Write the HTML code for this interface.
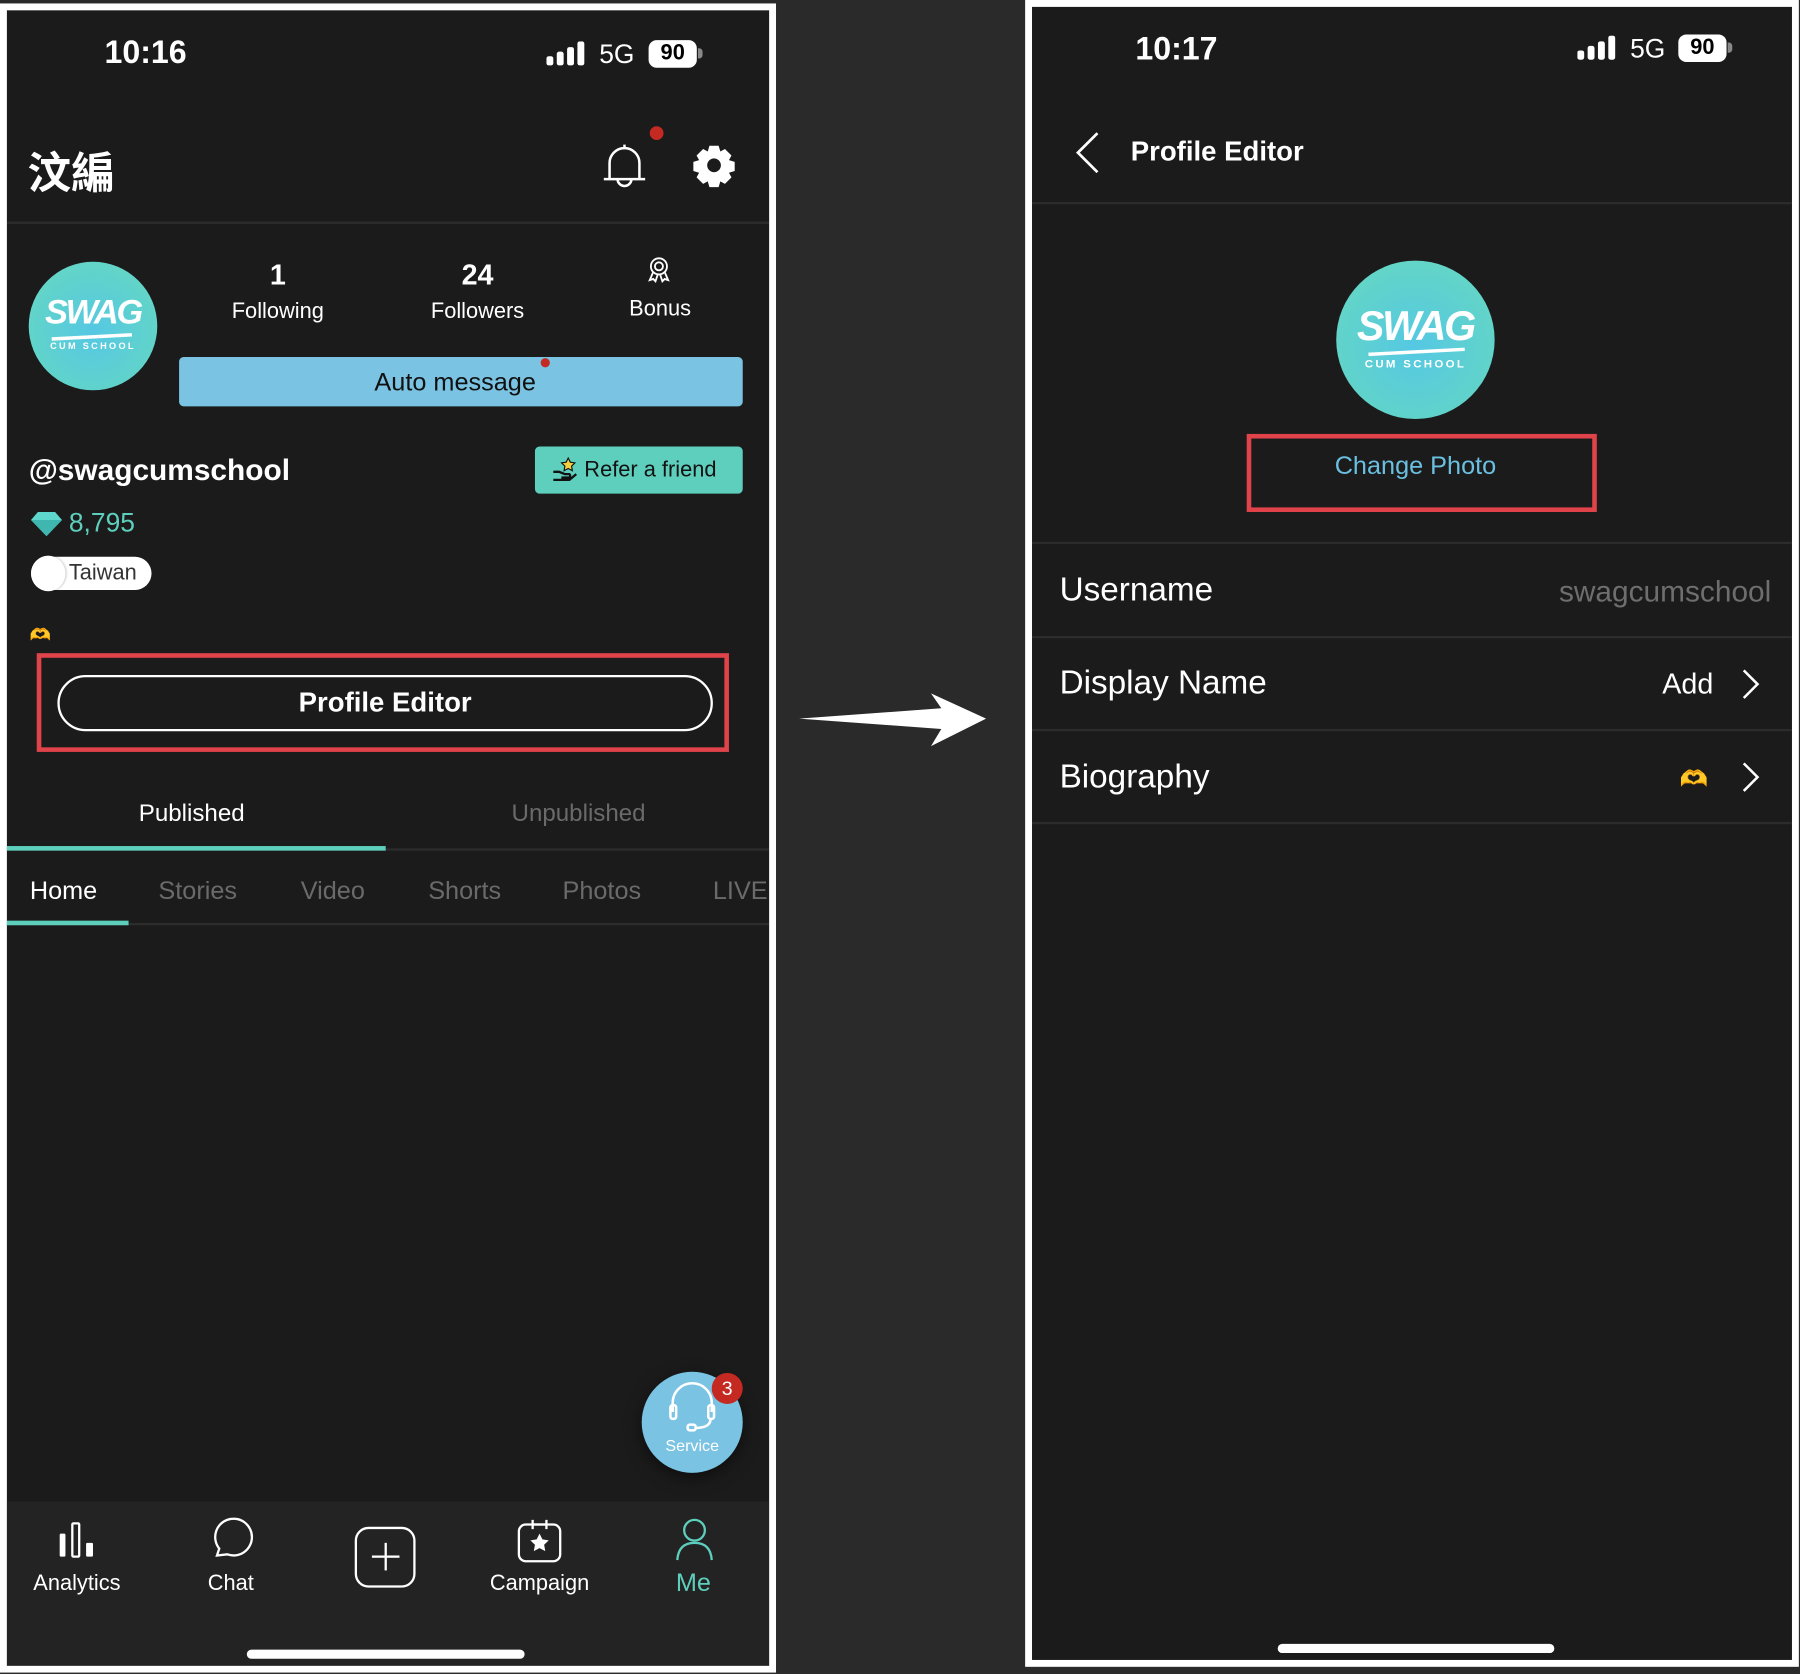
<!DOCTYPE html>
<html><head><meta charset="utf-8">
<style>
*{box-sizing:border-box;margin:0;padding:0}
html,body{width:1800px;height:1674px;overflow:hidden;background:#2a2a2a}
#root{position:absolute;left:0;top:0;width:1568px;height:1458px;transform:scale(1.14796);transform-origin:0 0;font-family:"Liberation Sans","Noto Sans CJK TC",sans-serif;color:#fff}
.a{position:absolute}
.phone{position:absolute;background:#1b1b1b;border:6px solid #fff;overflow:hidden}
.t{position:absolute;white-space:nowrap}
.c{transform:translateX(-50%)}
.div{position:absolute;height:2px;background:#2c2c2c}
.av{position:absolute;border-radius:50%;background:radial-gradient(circle at 50% 55%,#55c8e4 0%,#62d4c8 70%,#6fdcc0 100%)}
.av .sw{position:absolute;left:0;right:0;text-align:center;font-weight:bold;font-style:italic;color:#fff;letter-spacing:-2px}
.av .cs{position:absolute;left:0;right:0;text-align:center;font-weight:bold;color:#fff;letter-spacing:2px}
.gray{color:#6a6a6a}
</style></head><body><div id="root">

<!-- LEFT PHONE -->
<div class="phone" style="left:0;top:3px;width:676px;height:1454px;">
 <div class="a" style="left:-6px;top:-9px;width:676px;height:1458px;">
  <div class="t" style="left:91px;top:30px;font-size:28px;font-weight:bold">10:16</div>
  <svg class="a" style="left:476px;top:36px" width="36" height="22"><rect x="0" y="13" width="6" height="8" rx="2" fill="#fff"/><rect x="9" y="9" width="6" height="12" rx="2" fill="#fff"/><rect x="18" y="5" width="6" height="16" rx="2" fill="#fff"/><rect x="27" y="0" width="6" height="21" rx="2" fill="#fff"/></svg>
  <div class="t" style="left:522px;top:34px;font-size:23px">5G</div>
  <div class="a" style="left:565px;top:35px;width:42px;height:24px;border-radius:7px;background:#fff;color:#000;font-weight:bold;font-size:19px;text-align:center;line-height:24px">90</div>
  <div class="a" style="left:608px;top:42px;width:4px;height:9px;border-radius:0 3px 3px 0;background:#888"></div>

  <div class="t" style="left:24px;top:120px;font-size:38px;font-weight:bold">汶編</div>
  <svg class="a" style="left:522px;top:122px" width="44" height="44" viewBox="0 0 44 44" fill="none" stroke="#fff" stroke-width="2.2"><path d="M22 4v3M9 33V20a13 13 0 0 1 26 0v13M4 34h36M16 34a6 6 0 0 0 12 0"/></svg>
  <div class="a" style="left:566px;top:110px;width:12px;height:12px;border-radius:50%;background:#c42a22"></div>
  <svg class="a" style="left:602px;top:124px" width="40" height="40" viewBox="0 0 40 40"><path fill="#fff" fill-rule="evenodd" d="M16 3h8l1.5 5 4-2.2 5.7 5.7-2.2 4 5 1.5v8l-5 1.5 2.2 4-5.7 5.7-4-2.2-1.5 5h-8l-1.5-5-4 2.2-5.7-5.7 2.2-4-5-1.5v-8l5-1.5-2.2-4 5.7-5.7 4 2.2zM20 14a6 6 0 1 0 0.01 0z"/></svg>
  <div class="div" style="left:6px;top:193px;width:664px"></div>

  <div class="av" style="left:25px;top:228px;width:112px;height:112px">
   <div class="sw" style="top:28px;font-size:30px">SWAG</div>
   <div class="a" style="left:20px;top:64px;width:70px;height:3px;background:#fff;transform:rotate(-3deg)"></div>
   <div class="cs" style="top:69px;font-size:8px">CUM SCHOOL</div>
  </div>
  <div class="t c" style="left:242px;top:226px;font-size:25px;font-weight:bold">1</div>
  <div class="t c" style="left:242px;top:261px;font-size:19px">Following</div>
  <div class="t c" style="left:416px;top:226px;font-size:25px;font-weight:bold">24</div>
  <div class="t c" style="left:416px;top:261px;font-size:19px">Followers</div>
  <svg class="a" style="left:564px;top:223px" width="20" height="24" viewBox="0 0 20 24" fill="none" stroke="#fff" stroke-width="1.6"><circle cx="10" cy="9" r="7"/><circle cx="10" cy="9" r="3.5"/><path d="M5 14l-3 7 3-1 2 2 2-6M15 14l3 7-3-1-2 2-2-6"/></svg>
  <div class="t c" style="left:575px;top:259px;font-size:19px">Bonus</div>
  <div class="a" style="left:156px;top:311px;width:491px;height:43px;border-radius:4px;background:#7ac3e3;color:#111;font-size:22px;text-align:center;line-height:43px;padding-right:10px">Auto message</div>
  <div class="a" style="left:471px;top:312px;width:8px;height:8px;border-radius:50%;background:#c42a22"></div>

  <div class="t" style="left:25px;top:394px;font-size:26px;font-weight:bold">@swagcumschool</div>
  <div class="a" style="left:466px;top:389px;width:181px;height:41px;border-radius:4px;background:#5ecfbd;color:#111;font-size:19px;line-height:41px;padding-left:43px">Refer a friend</div>
  <svg class="a" style="left:480px;top:398px" width="24" height="22" viewBox="0 0 24 22"><path d="M2 13h5l5 2h4a2 2 0 0 1 0 3H9M2 20h14l6-5" fill="none" stroke="#111" stroke-width="2"/><path d="M15 1l1.8 3.6 4 .6-2.9 2.8.7 4-3.6-1.9-3.6 1.9.7-4-2.9-2.8 4-.6z" fill="#f4d03f" stroke="#111" stroke-width="1"/></svg>
  <svg class="a" style="left:27px;top:445px" width="27" height="22" viewBox="0 0 27 22"><path d="M6 1h15l6 7-13.5 14L0 8z" fill="#5ed8cc"/><path d="M0 8h27L13.5 22z" fill="#3fb6b0"/></svg>
  <div class="t" style="left:60px;top:442px;font-size:23px;color:#5ecfbd">8,795</div>
  <div class="a" style="left:27px;top:485px;width:105px;height:29px;border-radius:15px;background:#fff;color:#333;font-size:19px;line-height:29px;padding-left:33px">Taiwan</div>
  <div class="a" style="left:27px;top:484px;width:30px;height:31px;border-radius:50%;background:#fff;box-shadow:1px 0 2px rgba(0,0,0,.2)"></div>
  <div class="t" style="left:26px;top:544px;font-size:15px;color:#f0b030">🫶</div>
  <div class="a" style="left:32px;top:569px;width:603px;height:86px;border:4px solid #e0434a"></div>
  <div class="a" style="left:50px;top:588px;width:571px;height:49px;border:2px solid #fff;border-radius:25px;text-align:center;line-height:45px;font-size:24px;font-weight:bold">Profile Editor</div>

  <div class="t c" style="left:167px;top:697px;font-size:21px">Published</div>
  <div class="t c gray" style="left:504px;top:697px;font-size:21px">Unpublished</div>
  <div class="div" style="left:6px;top:739px;width:664px"></div>
  <div class="a" style="left:6px;top:737px;width:330px;height:4px;background:#5ecfbd"></div>
  <div class="t" style="left:26px;top:763px;font-size:22px">Home</div>
  <div class="t gray" style="left:138px;top:763px;font-size:22px">Stories</div>
  <div class="t gray" style="left:262px;top:763px;font-size:22px">Video</div>
  <div class="t gray" style="left:373px;top:763px;font-size:22px">Shorts</div>
  <div class="t gray" style="left:490px;top:763px;font-size:22px">Photos</div>
  <div class="t gray" style="left:621px;top:763px;font-size:22px">LIVE</div>
  <div class="div" style="left:6px;top:804px;width:664px"></div>
  <div class="a" style="left:6px;top:802px;width:106px;height:4px;background:#5ecfbd"></div>

  <div class="a" style="left:559px;top:1195px;width:88px;height:88px;border-radius:50%;background:#7ac3e3;box-shadow:0 4px 14px rgba(0,0,0,.5)"></div>
  <svg class="a" style="left:581px;top:1200px" width="44" height="50" viewBox="0 0 44 50" fill="none" stroke="#fff" stroke-width="2.2"><path d="M5 30V22a17 17 0 0 1 34 0v8"/><rect x="3" y="24" width="5" height="12" rx="2"/><rect x="36" y="24" width="5" height="12" rx="2"/><path d="M38 36q0 8-14 8"/><rect x="18" y="41" width="7" height="5" rx="2"/></svg>
  <div class="t c" style="left:603px;top:1251px;font-size:14px">Service</div>
  <div class="a" style="left:620px;top:1196px;width:27px;height:27px;border-radius:50%;background:#c42a22;text-align:center;line-height:27px;font-size:17px">3</div>

  <div class="a" style="left:6px;top:1308px;width:664px;height:150px;background:#232323"></div>
  <svg class="a" style="left:50px;top:1324px" width="34" height="34" viewBox="0 0 34 34" fill="#fff"><rect x="2" y="12" width="5" height="20" rx="1"/><rect x="13" y="3" width="6" height="29" rx="1" fill="none" stroke="#fff" stroke-width="2"/><rect x="25" y="20" width="6" height="12" rx="1"/></svg>
  <div class="t c" style="left:67px;top:1369px;font-size:19px">Analytics</div>
  <svg class="a" style="left:183px;top:1322px" width="38" height="38" viewBox="0 0 38 38" fill="none" stroke="#fff" stroke-width="2"><path d="M6 33l2-6A16 16 0 1 1 15 32z"/></svg>
  <div class="t c" style="left:201px;top:1369px;font-size:19px">Chat</div>
  <div class="a" style="left:309px;top:1330px;width:53px;height:53px;border:2px solid #fff;border-radius:12px"></div>
  <div class="a" style="left:324px;top:1355px;width:24px;height:2px;background:#fff"></div>
  <div class="a" style="left:335px;top:1344px;width:2px;height:24px;background:#fff"></div>
  <svg class="a" style="left:450px;top:1322px" width="40" height="40" viewBox="0 0 40 40" fill="none" stroke="#fff" stroke-width="2"><rect x="2" y="6" width="36" height="32" rx="6"/><path d="M14 2v8M26 2v8M14 6h12"/><path d="M20 14l2.5 5 5.5.8-4 3.9 1 5.5-5-2.6-5 2.6 1-5.5-4-3.9 5.5-.8z" fill="#fff" stroke="none"/></svg>
  <div class="t c" style="left:470px;top:1369px;font-size:19px">Campaign</div>
  <svg class="a" style="left:588px;top:1322px" width="34" height="38" viewBox="0 0 34 38" fill="none" stroke="#5ecfbd" stroke-width="2"><circle cx="17" cy="11" r="9"/><path d="M2 37q1-15 15-15t15 15"/></svg>
  <div class="t c" style="left:604px;top:1366px;font-size:22px;color:#5ecfbd">Me</div>
  <div class="a" style="left:215px;top:1437px;width:242px;height:8px;border-radius:4px;background:#fff"></div>
 </div>
</div>

<!-- ARROW -->
<svg class="a" style="left:0;top:0" width="1568" height="1458"><path d="M696 626L820 617L811 604L859 626L811 650L820 635Z" fill="#fff"/></svg>

<!-- RIGHT PHONE -->
<div class="phone" style="left:893px;top:0;width:674px;height:1452px;">
 <div class="a" style="left:-899px;top:-6px;width:1568px;height:1458px;">
  <div class="t" style="left:989px;top:27px;font-size:28px;font-weight:bold">10:17</div>
  <svg class="a" style="left:1374px;top:31px" width="36" height="22"><rect x="0" y="13" width="6" height="8" rx="2" fill="#fff"/><rect x="9" y="9" width="6" height="12" rx="2" fill="#fff"/><rect x="18" y="5" width="6" height="16" rx="2" fill="#fff"/><rect x="27" y="0" width="6" height="21" rx="2" fill="#fff"/></svg>
  <div class="t" style="left:1420px;top:29px;font-size:23px">5G</div>
  <div class="a" style="left:1462px;top:30px;width:42px;height:24px;border-radius:7px;background:#fff;color:#000;font-weight:bold;font-size:19px;text-align:center;line-height:24px">90</div>
  <div class="a" style="left:1505px;top:37px;width:4px;height:9px;border-radius:0 3px 3px 0;background:#888"></div>

  <svg class="a" style="left:934px;top:113px" width="28" height="40" viewBox="0 0 28 40" fill="none" stroke="#fff" stroke-width="2.4"><path d="M22 3L5 20l17 17"/></svg>
  <div class="t" style="left:985px;top:119px;font-size:24px;font-weight:bold">Profile Editor</div>
  <div class="div" style="left:899px;top:176px;width:664px"></div>

  <div class="av" style="left:1164px;top:227px;width:138px;height:138px">
   <div class="sw" style="top:36px;font-size:36px">SWAG</div>
   <div class="a" style="left:28px;top:78px;width:84px;height:3px;background:#fff;transform:rotate(-3deg)"></div>
   <div class="cs" style="top:85px;font-size:10px">CUM SCHOOL</div>
  </div>
  <div class="a" style="left:1086px;top:378px;width:305px;height:68px;border:4px solid #e0434a"></div>
  <div class="t c" style="left:1233px;top:393px;font-size:22px;color:#6bbfe0">Change Photo</div>
  <div class="div" style="left:899px;top:472px;width:664px"></div>

  <div class="t" style="left:923px;top:498px;font-size:29px">Username</div>
  <div class="t" style="right:25px;top:500px;font-size:26px;color:#6e6e6e">swagcumschool</div>
  <div class="div" style="left:899px;top:554px;width:664px"></div>
  <div class="t" style="left:923px;top:579px;font-size:29px">Display Name</div>
  <div class="t" style="left:1448px;top:582px;font-size:25px">Add</div>
  <svg class="a" style="left:1514px;top:581px" width="22" height="30" viewBox="0 0 22 30" fill="none" stroke="#fff" stroke-width="2.2"><path d="M5 3l12 12L5 27"/></svg>
  <div class="div" style="left:899px;top:635px;width:664px"></div>
  <div class="t" style="left:923px;top:661px;font-size:29px">Biography</div>
  <div class="t" style="left:1463px;top:666px;font-size:20px;color:#f0b030">🫶</div>
  <svg class="a" style="left:1514px;top:662px" width="22" height="30" viewBox="0 0 22 30" fill="none" stroke="#fff" stroke-width="2.2"><path d="M5 3l12 12L5 27"/></svg>
  <div class="div" style="left:899px;top:716px;width:664px"></div>

  <div class="a" style="left:1113px;top:1432px;width:241px;height:8px;border-radius:4px;background:#fff"></div>
 </div>
</div>

</div></body></html>
